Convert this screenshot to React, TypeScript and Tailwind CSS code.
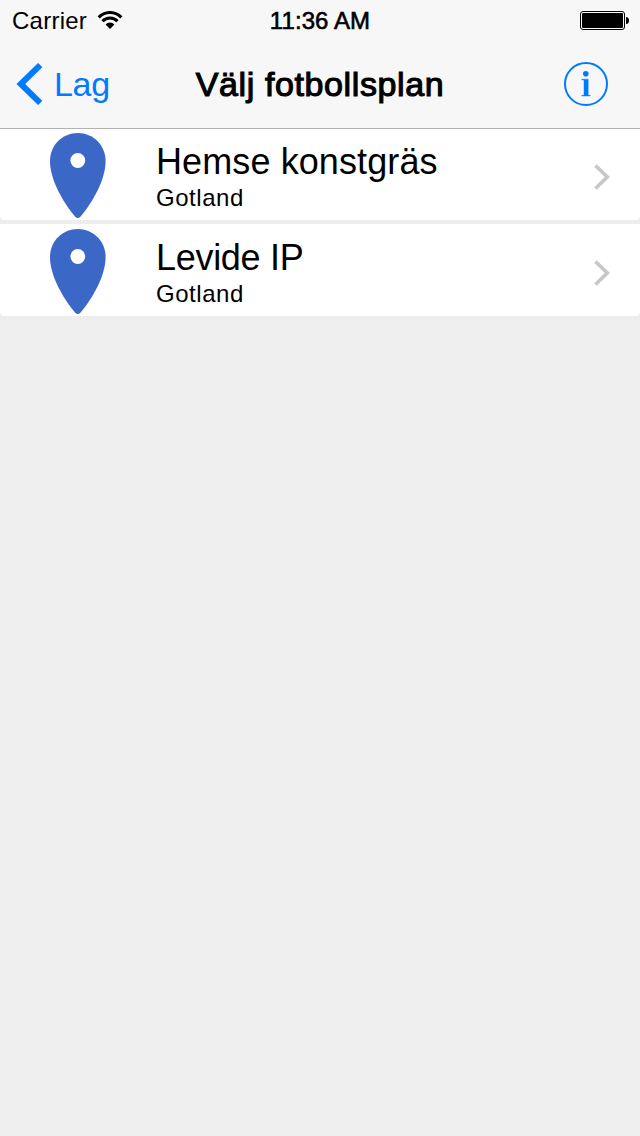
const FONT = "font-['Liberation_Sans',Arial,sans-serif]";

function StatusBar() {
  return (
    <div className="grid h-10 grid-cols-3 items-center pt-px text-[24px] leading-[40px]">
      <div className="flex items-center pl-3">
        <span className="tracking-[0.25px]">Carrier</span>
        <svg className="-mt-[3px] ml-[10px] h-[18px] w-[26px]" viewBox="0 0 26 18" fill="none" stroke="#000" strokeWidth="3.1">
          <path d="M1.7 6.3A15.8 15.8 0 0 1 24.3 6.3" />
          <path d="M5.5 10.3A10.3 10.3 0 0 1 20.5 10.3" />
          <path d="M8.6 13.4A6.2 6.2 0 0 1 17.4 13.4L13 18Z" fill="#000" stroke="none" />
        </svg>
      </div>
      <span className="text-center tracking-[0.1px] [-webkit-text-stroke:0.6px_#000]">11:36 AM</span>
      <svg className="-mt-[3px] mr-[11px] h-5 w-[50px] justify-self-end" viewBox="0 0 50 20">
        <rect x="1.5" y="1.5" width="44" height="18" rx="2.5" fill="none" stroke="#000" />
        <rect x="3" y="3" width="41" height="15" rx="1" fill="#000" />
        <path d="M47 7a3 3.5 0 0 1 0 7z" fill="#000" />
      </svg>
    </div>
  );
}

function NavBar() {
  return (
    <div className="grid h-[88px] grid-cols-[1fr_auto_1fr] items-center text-[34px] leading-[40px]">
      <button className="flex items-center pl-4 text-[#007aff]">
        <svg className="h-[42px] w-[27px]" viewBox="0 0 27 42" fill="none" stroke="#007aff" strokeWidth="6">
          <path d="M24.2 2.1L4.8 21L24.2 39.9" />
        </svg>
        <span className="ml-[11px] tracking-[-0.3px]">Lag</span>
      </button>
      <h1 className="font-normal tracking-[0.6px] [-webkit-text-stroke:1.1px_#000]">Välj fotbollsplan</h1>
      <button className="mr-8 justify-self-end" aria-label="Info">
        <svg className="size-11" viewBox="0 0 44 44">
          <circle cx="22" cy="22" r="21" fill="none" stroke="#007aff" strokeWidth="2" />
          <circle cx="21.8" cy="11.8" r="2.8" fill="#007aff" />
          <path d="M17.8 17.2h6.4V33.2h2V34h-8.4v-.8h2.2V18h-2.2z" fill="#007aff" stroke="#007aff" strokeWidth=".4" />
        </svg>
      </button>
    </div>
  );
}

function PitchRow({ name, area, tracking }: { name: string; area: string; tracking: string }) {
  return (
    <li className="h-24 bg-[#ededed]">
      <div className="flex h-[92px] items-start rounded-b-[4px] bg-white">
        <svg className="mt-[5px] ml-[50px] h-[86px] w-14 shrink-0" viewBox="0 0 56 86">
          <path
            d="M27.8 0C12.5 0 0 12 0 28C0 46 12 68 25 83.5Q27.8 86.5 30.6 83.5C43.5 68 55.6 46 55.6 28C55.6 12 43.1 0 27.8 0Z"
            fill="#3b67c7"
          />
          <circle cx="27.8" cy="27.5" r="7.4" fill="#fff" />
        </svg>
        <div className="ml-[50px] flex-1 pt-[14px]">
          <div className={`text-[36px] leading-[40px] ${tracking}`}>{name}</div>
          <div className="mt-[2px] text-[24px] leading-[28px] tracking-[0.55px]">{area}</div>
        </div>
        <svg className="mt-[36px] mr-[30px] h-[26px] w-4" viewBox="0 0 16 26" fill="none" stroke="#c7c7cc" strokeWidth="3.8">
          <path d="M1.5 1.5L13.2 13L1.5 24.5" />
        </svg>
      </div>
    </li>
  );
}

export default function App() {
  return (
    <div className={`${FONT} flex h-[1136px] w-[640px] flex-col overflow-hidden bg-[#efefef] text-black`}>
      <header className="z-10 h-[129px] shrink-0 border-b border-[#b2b2b2] bg-[#f7f7f7]">
        <StatusBar />
        <NavBar />
      </header>
      <ul className="-mt-px">
        <PitchRow name="Hemse konstgräs" area="Gotland" tracking="tracking-[0.1px]" />
        <PitchRow name="Levide IP" area="Gotland" tracking="tracking-[-0.3px]" />
      </ul>
    </div>
  );
}
